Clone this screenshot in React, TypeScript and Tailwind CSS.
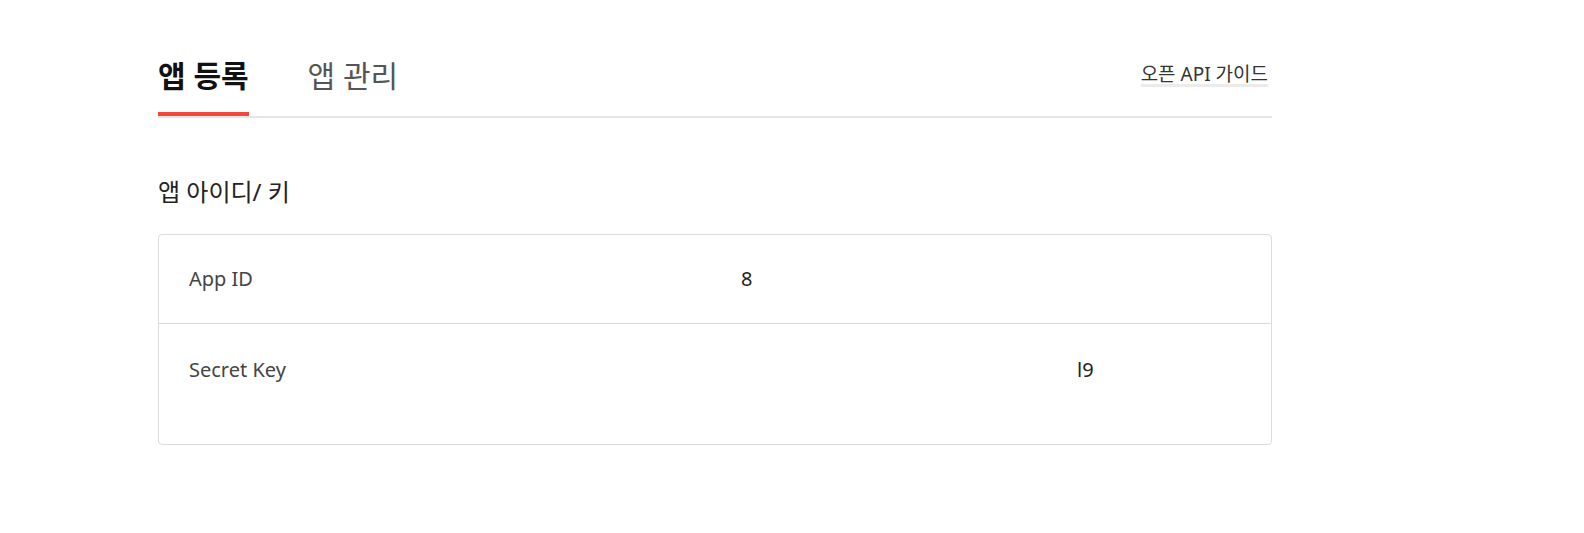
export default function App() {
  return (
    <div
      className="min-h-screen bg-white text-[#222]"
      style={{ fontFamily: '"Noto Sans", "Noto Sans CJK KR", sans-serif' }}
    >
      <div className="ml-[158px] w-[1114px] pt-[56px]">
        <div className="flex items-start border-b-2 border-[#e5e5e5]">
          <div className="-mb-[2px] border-b-4 border-[#f5483b] pb-[16px] text-[30px] leading-[40px] font-bold text-[#111]">
            앱 등록
          </div>
          <div className="ml-[59px] pb-[20px] text-[30px] leading-[40px] text-[#555]">
            앱 관리
          </div>
          <a
            href="#"
            className="ml-auto mr-[4px] mt-[8px] border-b-[3px] border-[#ebebeb] text-[19px] leading-[20px] text-[#333]"
          >
            오픈 API 가이드
          </a>
        </div>

        <h2 className="mt-[58px] text-[24px] leading-[32px] font-normal text-[#222]">
          앱 아이디/ 키
        </h2>

        <div className="mt-[26px] rounded border border-[#dcdcdc]">
          <div className="flex h-[89px] items-center border-b border-[#dcdcdc] px-[30px] text-[20px]">
            <div className="w-[552px] text-[#444]">App ID</div>
            <div className="text-[#222]">8</div>
          </div>
          <div className="flex h-[120px] items-start px-[30px] pt-[31px] text-[20px] leading-[30px]">
            <div className="w-[552px] text-[#444]">Secret Key</div>
            <div className="ml-[336px] text-[#222]">l9</div>
          </div>
        </div>
      </div>
    </div>
  );
}
